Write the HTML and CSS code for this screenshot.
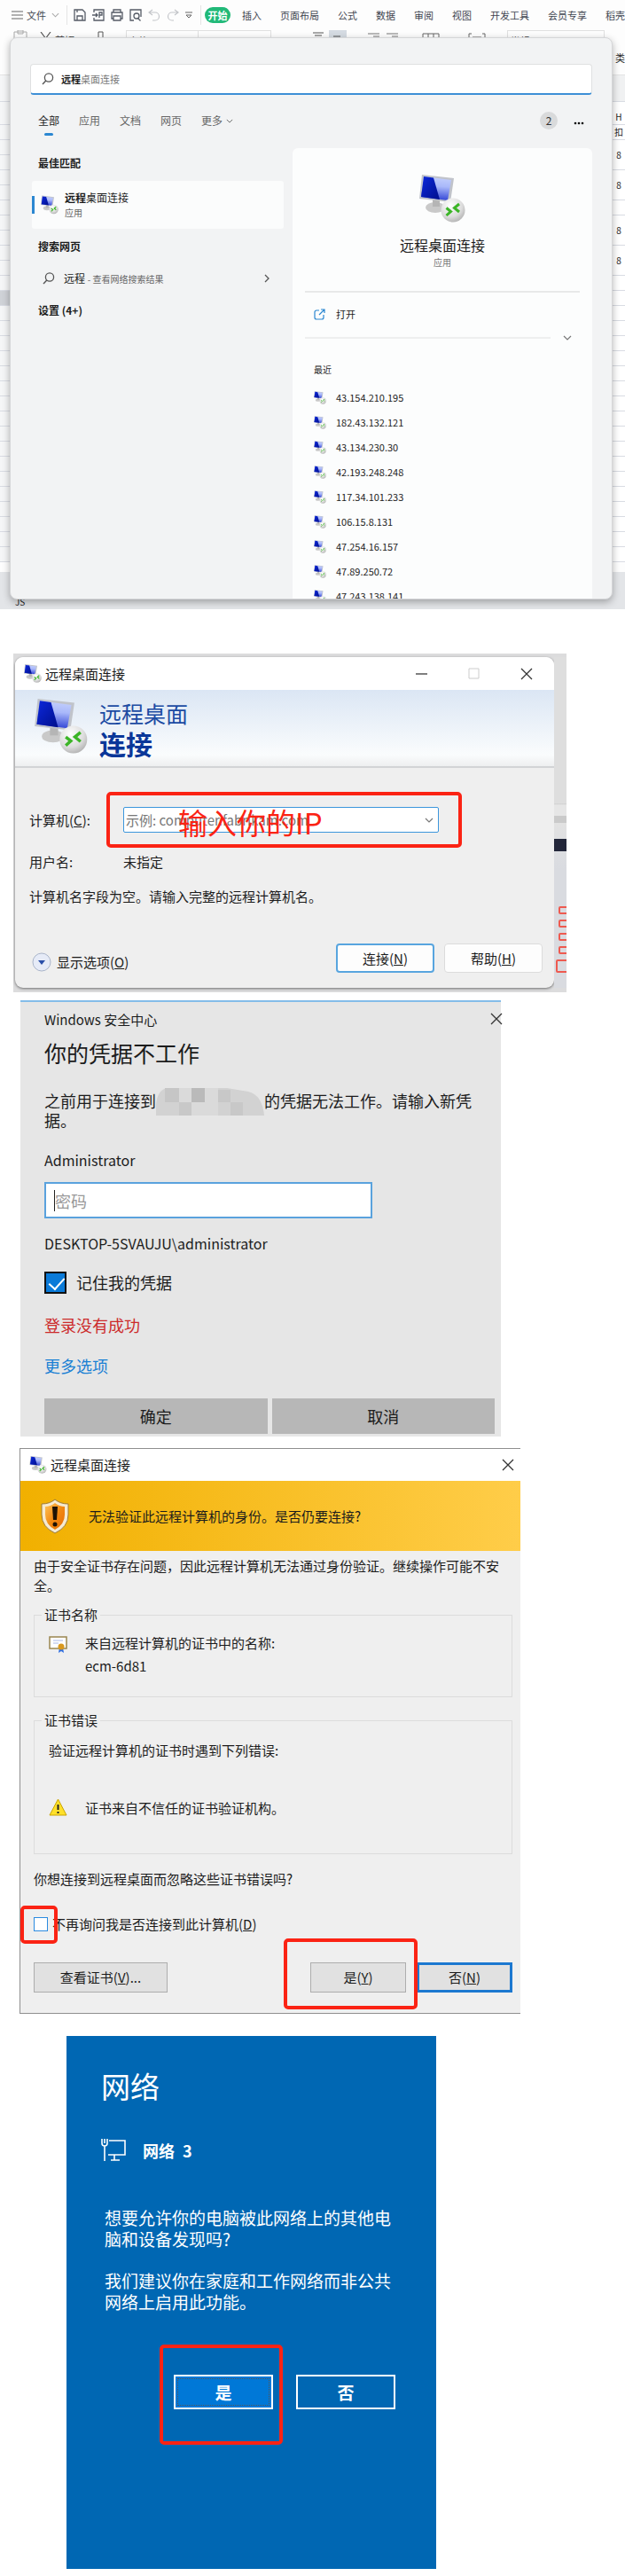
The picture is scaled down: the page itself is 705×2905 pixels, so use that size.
FILE: index.html
```html
<!DOCTYPE html>
<html lang="zh-CN">
<head>
  <meta charset="UTF-8" />
  <meta name="viewport" content="width=device-width, initial-scale=1.0"/>
  <title>远程桌面连接</title>
  <link rel="stylesheet" href="styles.css">
</head>
<body>
  <!-- shared icons -->
  <svg class="defs" width="0" height="0" aria-hidden="true">
    <defs>
      <linearGradient id="screen" x1="0.5" y1="0" x2="0.4" y2="1">
        <stop offset="0" stop-color="#c3cffc"/>
        <stop offset="0.4" stop-color="#a9b8fa"/>
        <stop offset="1" stop-color="#2c3fd4"/>
      </linearGradient>
      <linearGradient id="screen-dark" x1="0" y1="0" x2="1" y2="1">
        <stop offset="0" stop-color="#0c28dc"/>
        <stop offset="1" stop-color="#000f8c"/>
      </linearGradient>
      <radialGradient id="ball" cx="0.4" cy="0.3" r="0.8">
        <stop offset="0" stop-color="#ffffff"/>
        <stop offset="0.6" stop-color="#dcdcdc"/>
        <stop offset="1" stop-color="#a8a8a8"/>
      </radialGradient>
      <linearGradient id="shield" x1="0" y1="0" x2="1" y2="1">
        <stop offset="0" stop-color="#ffc45a"/>
        <stop offset="0.5" stop-color="#f28a12"/>
        <stop offset="1" stop-color="#e86a00"/>
      </linearGradient>
    </defs>
    <symbol id="rdp" viewBox="0 0 52 54">
      <ellipse cx="18" cy="37" rx="11" ry="6" fill="#c9c9c9"/>
      <path d="M15 27h8v9h-8z" fill="#b5b5b5"/>
      <path d="M3 0l36 4-4 27L0 27z" fill="#c0c3ca"/>
      <path d="M5 2l31 4-4 23L2 25z" fill="url(#screen)"/>
      <path d="M5 2l11 1.500 7 24.500L2 25z" fill="url(#screen-dark)"/>
      <circle cx="38" cy="40" r="13.500" fill="url(#ball)"/>
      <path d="M30.500 37.500l5 4-5 4.500M45 33l-5.500 4.500 5.500 4.500" fill="none" stroke="#3cb527" stroke-width="3"/>
    </symbol>
    <symbol id="search" viewBox="0 0 14 14">
      <circle cx="8" cy="5.500" r="4.600" fill="none" stroke="#555" stroke-width="1.300"/>
      <path d="M4.800 9L1 13" stroke="#555" stroke-width="1.400"/>
    </symbol>
    <symbol id="down" viewBox="0 0 10 6">
      <path d="M1 1l4 4 4-4" fill="none" stroke="currentColor" stroke-width="1.200"/>
    </symbol>
    <symbol id="close" viewBox="0 0 14 14">
      <path d="M1 1l12 12M13 1L1 13" fill="none" stroke="#333" stroke-width="1.300"/>
    </symbol>
  </svg>

  <section class="workbook">
    <nav class="menu">
      <svg class="burger" width="13" height="10" viewBox="0 0 13 10"><path d="M0 1h13M0 5h13M0 9h13" stroke="#666" stroke-width="1.2"/></svg>
      <a href="#" class="file">文件</a>
      <svg class="file-arrow" width="9" height="6"><use href="#down"/></svg>
      <div class="quick">
        <svg width="14" height="14" viewBox="0 0 14 14"><path d="M1 1h9l3 3v9H1zM4 13V8h6v5M4 1v3" fill="none" stroke="#555b66" stroke-width="1.3"/></svg>
        <svg width="14" height="14" viewBox="0 0 14 14"><path d="M2 4V1h11v12H2v-3M0 7h6M4 5l2 2-2 2M8 10V4h3v3H8" fill="none" stroke="#555b66" stroke-width="1.3"/></svg>
        <svg width="14" height="14" viewBox="0 0 14 14"><path d="M3 4V1h8v3M3 11H1V4h12v7h-2M3 8h8v5H3z" fill="none" stroke="#555b66" stroke-width="1.3"/></svg>
        <svg width="14" height="14" viewBox="0 0 14 14"><path d="M5 13H1V1h12v8M9.5 10.5l3 3" fill="none" stroke="#555b66" stroke-width="1.3"/><circle cx="8" cy="8" r="3" fill="none" stroke="#555b66" stroke-width="1.3"/></svg>
        <svg width="14" height="14" viewBox="0 0 14 14"><path d="M5 1L1 4l4 3M1 4h7a4 4 0 0 1 0 9H5" fill="none" stroke="#c4c6ca" stroke-width="1.2"/></svg>
        <svg width="14" height="14" viewBox="0 0 14 14"><path d="M9 1l4 3-4 3M13 4H6a4 4 0 0 0 0 9h2" fill="none" stroke="#c4c6ca" stroke-width="1.2"/></svg>
        <svg width="8" height="8" viewBox="0 0 8 8"><path d="M0 1h8M1 4h6L4 7z" fill="none" stroke="#666"/></svg>
      </div>
      <button class="start">开始</button>
      <div class="tabs">
        <a href="#">插入</a><a href="#">页面布局</a><a href="#">公式</a><a href="#">数据</a><a href="#">审阅</a><a href="#">视图</a><a href="#">开发工具</a><a href="#">会员专享</a><a href="#">稻壳</a>
      </div>
    </nav>
    <div class="ribbon">
      <svg width="16" height="16" viewBox="0 0 16 16"><path d="M1 16V2h14v14M5 0h6v4H5z" fill="none" stroke="#aaa"/></svg>
      <svg width="13" height="13" viewBox="0 0 13 13"><path d="M1 0l9 12M12 0L3 12" stroke="#555" stroke-width="1.2"/></svg>
      <span>剪切</span>
      <svg class="brush" width="7" height="14" viewBox="0 0 7 14"><path d="M1 14V1h5v13" fill="none" stroke="#555"/></svg>
      <div class="font-box"><span>宋体</span><span>11</span></div>
      <span class="grow">A⁺</span><span>A⁻</span>
      <svg class="align" width="38" height="14" viewBox="0 0 38 14"><path d="M18 0h20v14H18z" fill="#d5dbe2"/><path d="M0 3h12M2 6h8M0 9h12M23 7h8M22 10h10" stroke="#555"/></svg>
      <svg class="indent" width="35" height="14" viewBox="0 0 35 14"><path d="M0 4h13M6 7h7M0 10h13M21 4h13M27 7h7M21 10h13" stroke="#777"/></svg>
      <svg class="merge" width="20" height="14" viewBox="0 0 20 14"><path d="M1 14V4h18v10M7 4v10M13 4v10" fill="none" stroke="#666"/></svg>
      <svg class="wrap" width="20" height="14" viewBox="0 0 20 14"><path d="M4 4H1v10M16 4h3v10M5 8h10" fill="none" stroke="#666"/></svg>
      <div class="format-box">常规</div>
    </div>
    <div class="grid">
      <div class="edge left">
        <i class="bar"></i><i class="tall"></i><i></i><i></i><i></i><i></i><i></i><i></i><i></i><i></i><i></i><i></i><i></i><i></i><i class="picked"></i><i></i><i></i><i></i><i></i><i></i><i></i><i></i><i></i><i></i><i></i><i></i><i></i><i></i><i></i><i></i><i></i><i></i>
      </div>
      <div class="edge right">
        <b>类</b><i class="bar"></i><i class="tall"></i><i class="head">H</i><i>扣</i><i class="two">8</i><i class="two">8</i><i></i><i class="two">8</i><i class="two">8</i><i></i><i></i><i></i><i></i><i></i><i></i><i></i><i></i><i></i><i></i><i></i><i></i><i></i><i></i><i></i><i></i><i></i><i></i><i></i>
      </div>
    </div>
    <div class="status">JS</div>

    <div class="search-panel">
      <div class="search-box">
        <svg width="14" height="14"><use href="#search"/></svg>
        <input type="text" value="远程" aria-label="搜索">
        <span>桌面连接</span>
      </div>
      <div class="filters">
        <a href="#" class="on">全部</a>
        <a href="#">应用</a>
        <a href="#">文档</a>
        <a href="#">网页</a>
        <a href="#" class="more">更多 <svg width="8" height="5"><use href="#down"/></svg></a>
        <span class="count">2</span>
        <button class="dots" aria-label="更多选项"><svg width="12" height="4" viewBox="0 0 12 4"><circle cx="2" cy="2" r="1.3"/><circle cx="6" cy="2" r="1.3"/><circle cx="10" cy="2" r="1.3"/></svg></button>
      </div>
      <div class="results">
        <div class="matches">
          <h3>最佳匹配</h3>
          <a href="#" class="best">
            <svg width="20" height="22"><use href="#rdp"/></svg>
            <span><strong>远程</strong>桌面连接<small>应用</small></span>
          </a>
          <h3>搜索网页</h3>
          <a href="#" class="web">
            <svg width="14" height="14"><use href="#search"/></svg>
            <span>远程 <small>- 查看网络搜索结果</small></span>
            <svg class="go" width="6" height="10" viewBox="0 0 6 10"><path d="M1 1l4 4-4 4" fill="none" stroke="#555" stroke-width="1.3"/></svg>
          </a>
          <h3>设置 (4+)</h3>
        </div>
        <div class="detail">
          <svg class="app-icon" width="52" height="54"><use href="#rdp"/></svg>
          <h2>远程桌面连接</h2>
          <p>应用</p>
          <a href="#" class="open">
            <svg width="13" height="13" viewBox="0 0 13 13"><path d="M6 2H3a2 2 0 0 0-2 2v6a2 2 0 0 0 2 2h6a2 2 0 0 0 2-2V7M8 1h4v4M12 1L6 7" fill="none" stroke="#2b87d1" stroke-width="1.2"/></svg>
            打开
          </a>
          <div class="fold"><hr><svg width="10" height="6"><use href="#down"/></svg></div>
          <h4>最近</h4>
          <ul>
            <li><svg width="14" height="15"><use href="#rdp"/></svg>43.154.210.195</li>
            <li><svg width="14" height="15"><use href="#rdp"/></svg>182.43.132.121</li>
            <li><svg width="14" height="15"><use href="#rdp"/></svg>43.134.230.30</li>
            <li><svg width="14" height="15"><use href="#rdp"/></svg>42.193.248.248</li>
            <li><svg width="14" height="15"><use href="#rdp"/></svg>117.34.101.233</li>
            <li><svg width="14" height="15"><use href="#rdp"/></svg>106.15.8.131</li>
            <li><svg width="14" height="15"><use href="#rdp"/></svg>47.254.16.157</li>
            <li><svg width="14" height="15"><use href="#rdp"/></svg>47.89.250.72</li>
            <li><svg width="14" height="15"><use href="#rdp"/></svg>47.243.138.141</li>
          </ul>
        </div>
      </div>
    </div>
  </section>

  <section class="connect-shot">
    <div class="connect">
      <header class="titlebar">
        <svg width="20" height="21"><use href="#rdp"/></svg>
        <span>远程桌面连接</span>
        <button aria-label="最小化"><svg width="13" height="14" viewBox="0 0 13 14"><path d="M0 7h13" stroke="#555" stroke-width="1.3"/></svg></button>
        <button aria-label="最大化"><svg width="13" height="14" viewBox="0 0 13 14"><path d="M1 1h11v11H1z" fill="none" stroke="#ccc"/></svg></button>
        <button aria-label="关闭"><svg width="14" height="14"><use href="#close"/></svg></button>
      </header>
      <div class="brand">
        <svg width="60" height="62"><use href="#rdp"/></svg>
        <div>远程桌面<strong>连接</strong></div>
      </div>
      <form class="connect-form">
        <label for="host">计算机(<u>C</u>):</label>
        <div class="combo">
          <input id="host" type="text" placeholder="示例: computer.fabrikam.com">
          <svg width="10" height="6"><use href="#down"/></svg>
          <div class="mark">输入你的IP</div>
        </div>
        <span>用户名:</span>
        <span class="user">未指定</span>
        <p>计算机名字段为空。请输入完整的远程计算机名。</p>
      </form>
      <footer>
        <a href="#" class="options">
          <svg width="22" height="22" viewBox="0 0 22 22"><circle cx="11" cy="11" r="10" fill="#e6ebf7" stroke="#a9b4c9"/><path d="M7 9h8l-4 5z" fill="#2a4fa8"/></svg>
          <span>显示选项(<u>O</u>)</span>
        </a>
        <button class="primary">连接(<u>N</u>)</button>
        <button>帮助(<u>H</u>)</button>
      </footer>
    </div>
    <!-- strip of the window behind the dialog -->
    <div class="behind">
      <i class="navy"></i>
      <i class="tag"></i><i class="tag"></i><i class="tag"></i><i class="tag"></i><i class="tag big"></i>
    </div>
  </section>

  <section class="security">
    <header>
      <span>Windows 安全中心</span>
      <button aria-label="关闭"><svg width="14" height="14"><use href="#close"/></svg></button>
    </header>
    <h2>你的凭据不工作</h2>
    <p class="why">之前用于连接到<svg class="mosaic" width="122" height="31" viewBox="0 0 122 31"><path d="M0 31V18Q2 2 12 0h68l24 4q16 4 18 27z" fill="#d2d2d2"/><path d="M10 0h16v16H10z" fill="#c6c6c6"/><path d="M40 0h15v16H40z" fill="#bababa"/><path d="M70 2h14v14H70zM84 16h14v15H84zM26 16h14v15H26z" fill="#c8c8c8"/><path d="M55 0h15v16H55zM40 16h30v15H40zM26 0h14v16H26z" fill="#dadada"/></svg>的凭据无法工作。请输入新凭据。</p>
    <label class="account" for="password">Administrator</label>
    <div class="password"><i></i><input id="password" type="password" placeholder="密码"></div>
    <p class="domain">DESKTOP-5SVAUJU\administrator</p>
    <label class="remember"><input type="checkbox" checked> 记住我的凭据</label>
    <p class="error">登录没有成功</p>
    <a href="#" class="others">更多选项</a>
    <footer>
      <button>确定</button>
      <button>取消</button>
    </footer>
  </section>

  <section class="cert">
    <header class="titlebar">
      <svg width="20" height="20"><use href="#rdp"/></svg>
      <span>远程桌面连接</span>
      <button aria-label="关闭"><svg width="14" height="14"><use href="#close"/></svg></button>
    </header>
    <div class="warning">
      <svg width="34" height="40" viewBox="0 0 34 40"><path d="M17 1q6 5 15 5v12q0 14-15 21Q2 32 2 18V6q9 0 15-5z" fill="#f6ead0" stroke="#9b7b3a"/><path d="M17 5q5 4 11 4v9q0 11-11 17Q6 29 6 18V9q6 0 11-4z" fill="url(#shield)"/><path d="M14 9h6l-1 15h-4z" fill="#1d1205"/><circle cx="17" cy="29" r="2.5" fill="#1d1205"/></svg>
      无法验证此远程计算机的身份。是否仍要连接?
    </div>
    <div class="cert-body">
      <p>由于安全证书存在问题，因此远程计算机无法通过身份验证。继续操作可能不安全。</p>
      <fieldset class="name">
        <legend>证书名称</legend>
        <svg width="21" height="20" viewBox="0 0 21 20"><path d="M1 1h19v13H1z" fill="#fff" stroke="#9b8650" stroke-width="1.5"/><path d="M5 5h11M5 8h6" stroke="#a9b8e8"/><path d="M12 13l-1 6 3-2 3 2-1-6z" fill="#2f6fe0"/><circle cx="14" cy="12" r="3.5" fill="#d9981e"/></svg>
        <div>来自远程计算机的证书中的名称:<br>ecm-6d81</div>
      </fieldset>
      <fieldset class="errors">
        <legend>证书错误</legend>
        <p>验证远程计算机的证书时遇到下列错误:</p>
        <svg width="21" height="20" viewBox="0 0 21 20"><path d="M10.5 1L20 19H1z" fill="#ffe02a" stroke="#c9a400" stroke-linejoin="round"/><path d="M10.5 7v6M10.5 15v2" stroke="#222" stroke-width="2"/></svg>
        <div>证书来自不信任的证书验证机构。</div>
      </fieldset>
      <p>你想连接到远程桌面而忽略这些证书错误吗?</p>
      <label class="ask"><span class="tick"><input type="checkbox"></span><span>不再询问我是否连接到此计算机(<u>D</u>)</span></label>
      <footer>
        <button class="view">查看证书(<u>V</u>)...</button>
        <span class="yes"><button>是(<u>Y</u>)</button></span>
        <button class="no">否(<u>N</u>)</button>
      </footer>
    </div>
  </section>

  <section class="network">
    <h1>网络</h1>
    <div class="net-name">
      <svg width="28" height="26" viewBox="0 0 28 26"><path d="M9 2h18v16H8M15 18v6M11 24h10M4 8v17M1 0v5q0 3 3 3t3-3V0M4 0v5" fill="none" stroke="#fff" stroke-width="1.6"/></svg>
      网络&ensp;3
    </div>
    <p>想要允许你的电脑被此网络上的其他电脑和设备发现吗?</p>
    <p>我们建议你在家庭和工作网络而非公共网络上启用此功能。</p>
    <footer>
      <span class="allow"><button>是</button></span>
      <button>否</button>
    </footer>
  </section>
</body>
</html>
```
FILE: styles.css
```css
* {
  box-sizing: border-box;
}
body {
  margin: 0;
  background: #fff;
  font-family: 'Noto Sans CJK SC', 'Noto Sans', sans-serif;
  font-size: 15px;
  line-height: 22px;
  color: #1c1c1c;
}
h1, h2, h3, h4, p, ul {
  margin: 0;
  padding: 0;
}
a {
  color: inherit;
  text-decoration: none;
}
button, input {
  font: inherit;
  color: inherit;
  margin: 0;
  padding: 0;
}
svg {
  flex: none;
}
.defs {
  position: absolute;
}

/* spreadsheet and start menu search */
.workbook {
  position: relative;
  overflow: hidden;
  height: 687px;
  background: #fdfdfd;
  font-size: 11px;
}
.menu {
  display: flex;
  align-items: center;
  height: 33px;
  padding-left: 13px;
  color: #3f4550;
  white-space: nowrap;
}
.file {
  margin-left: 4px;
}
.file-arrow {
  margin-left: 6px;
  color: #aaa;
}
.quick {
  display: flex;
  align-items: center;
  gap: 7px;
  height: 22px;
  margin-left: 8px;
  padding: 0 9px 0 7px;
  border: solid #e4e4e4;
  border-width: 0 1px;
}
.start {
  width: 38px;
  height: 18px;
  margin-left: 4px;
  border: none;
  border-radius: 9px;
  background: #21b978;
  color: #fff;
  font-weight: bold;
  line-height: 18px;
}
.tabs {
  display: flex;
  gap: 21px;
  margin-left: 13px;
}
.ribbon {
  display: flex;
  height: 51px;
  padding: 1px 0 0 15px;
  color: #444;
}
.ribbon svg:nth-child(2) {
  margin: 2px 4px 0 14px;
}
.ribbon .brush {
  margin: 1px 25px 0 26px;
}
.font-box {
  display: flex;
  width: 164px;
  border: 1px solid #e0e0e0;
}
.font-box span {
  width: 106px;
  padding-left: 2px;
  border-right: 1px solid #e0e0e0;
}
.font-box span + span {
  border: none;
}
.grow {
  margin: 0 4px 0 9px;
}
.ribbon .align {
  margin-left: 13px;
}
.indent {
  margin-left: 24px;
}
.merge {
  margin-left: 26px;
}
.wrap {
  margin-left: 32px;
}
.format-box {
  width: 110px;
  margin-left: 24px;
  padding-left: 3px;
  border: 1px solid #e0e0e0;
}
.grid {
  display: flex;
  justify-content: space-between;
}
.edge {
  position: relative;
  width: 14px;
}
.edge i {
  display: block;
  height: 17px;
  border-bottom: 1px solid #d9dce3;
  background: #fff;
  font-style: normal;
  font-size: 10px;
  line-height: 16px;
  text-align: center;
  overflow: hidden;
}
.edge b {
  position: absolute;
  top: -30px;
  right: 0;
  font-weight: normal;
}
.edge.left i {
  background: #f5f6f7;
}
.edge .two {
  height: 34px;
  line-height: 34px;
}
.edge .bar {
  height: 31px;
  border-top: 1px solid #e4e4e4;
  background: #f0f1f2;
}
.edge .tall {
  height: 9px;
  border: none;
}
.edge.left .picked {
  background: #cfd2d7;
}
.status {
  position: absolute;
  right: 0;
  bottom: 0;
  left: 0;
  height: 42px;
  padding: 23px 0 0 17px;
  background: #e3e5e8;
  font-size: 10px;
}
.search-panel {
  position: absolute;
  top: 42px;
  right: 14px;
  bottom: 11px;
  left: 11px;
  display: flex;
  flex-direction: column;
  overflow: hidden;
  padding: 29px 22px 0;
  border: 1px solid #d5d6d8;
  border-radius: 8px;
  background: #f2f3f4;
  box-shadow: 0 3px 8px rgba(0, 0, 0, 0.3);
}
.search-box {
  display: flex;
  align-items: center;
  flex: none;
  height: 35px;
  padding-left: 12px;
  border: 1px solid #dfe0e1;
  border-bottom: 2px solid #3d8fd6;
  border-radius: 4px;
  background: #fff;
}
.search-box input {
  width: 22px;
  margin-left: 8px;
  border: none;
  outline: none;
  background: none;
  font-weight: bold;
}
.search-box span {
  color: #777;
}
.filters {
  display: flex;
  align-items: center;
  gap: 22px;
  height: 46px;
  margin-top: 6px;
  padding: 0 9px;
  color: #666;
  font-size: 12px;
}
.filters .on {
  position: relative;
  color: #222;
}
.filters .on::after {
  content: "";
  position: absolute;
  bottom: -6px;
  left: 7px;
  width: 10px;
  height: 3px;
  border-radius: 2px;
  background: #2b87d1;
}
.more {
  display: flex;
  align-items: center;
  gap: 4px;
}
.count {
  width: 20px;
  height: 20px;
  margin-left: auto;
  border-radius: 50%;
  background: #d9dadb;
  line-height: 20px;
  text-align: center;
  color: #333;
}
.dots {
  margin-left: -4px;
  border: none;
  background: none;
  line-height: 10px;
}
.results {
  display: grid;
  grid-template-columns: 286fr 338fr;
  gap: 10px;
  flex: 1;
  min-height: 0;
  margin-top: 8px;
}
.matches {
  padding: 6px 0 0 2px;
}
.matches h3 {
  padding-left: 7px;
  font-size: 12px;
  line-height: 22px;
}
.best {
  display: flex;
  align-items: center;
  height: 54px;
  margin: 9px 0;
  padding-left: 7px;
  border-radius: 3px;
  background: #fbfcfc;
  font-size: 12px;
  line-height: 17px;
}
.best::before {
  content: "";
  width: 3px;
  height: 20px;
  margin: 0 7px 0 -7px;
  background: #2b87d1;
}
.best span {
  margin-left: 7px;
}
small {
  color: #666;
  font-size: 10px;
}
.best small {
  display: block;
}
.web {
  display: flex;
  align-items: center;
  height: 50px;
  padding: 0 16px 0 12px;
  font-size: 12px;
}
.web span {
  margin: 0 auto 0 10px;
}
.detail {
  padding: 30px 14px 0;
  border-radius: 6px 6px 0 0;
  background: #fcfdfd;
  text-align: center;
}
.app-icon {
  display: block;
  margin: 0 auto 13px;
}
.detail h2 {
  font-size: 16px;
  font-weight: normal;
  line-height: 24px;
}
.detail p {
  padding-bottom: 24px;
  border-bottom: 2px solid #e8e9e9;
  color: #777;
  font-size: 10px;
  line-height: 16px;
}
.open {
  display: flex;
  align-items: center;
  gap: 12px;
  height: 48px;
  padding-left: 10px;
}
.fold {
  display: flex;
  align-items: center;
  justify-content: space-between;
  height: 6px;
  padding-right: 9px;
  color: #777;
}
.fold hr {
  width: 277px;
  margin: 0;
  border: none;
  border-top: 2px solid #eeefef;
}
.detail h4 {
  margin: 22px 0 6px 10px;
  font-size: 10px;
  font-weight: normal;
  text-align: left;
}
.detail ul {
  list-style: none;
  padding-left: 10px;
}
.detail li {
  display: flex;
  align-items: center;
  gap: 11px;
  height: 28px;
}

/* remote desktop connection */
.connect-shot {
  display: flex;
  max-width: 624px;
  margin: 50px 0 0 15px;
  padding: 4px 0 5px 2px;
  background: #dcdcdd;
}
.connect {
  flex: 1;
  border-radius: 9px;
  background: #efefef;
  box-shadow: 0 1px 3px rgba(0, 0, 0, 0.5);
  overflow: hidden;
}
.titlebar {
  display: flex;
  align-items: center;
  height: 37px;
  padding: 0 24px 0 10px;
  background: #fff;
}
.titlebar span {
  margin: 0 auto 0 4px;
}
.titlebar button {
  display: flex;
  margin-left: 46px;
  border: none;
  background: none;
}
.brand {
  display: flex;
  gap: 13px;
  height: 88px;
  padding: 10px 0 0 22px;
  border-bottom: 2px solid #d2d4d6;
  background: linear-gradient(#dbe6f4, #fafcfd 85%, #eeeff0);
  color: #1c4ba3;
  font-size: 25px;
  line-height: 32px;
}
.brand strong {
  display: block;
  color: #0a3799;
  font-size: 30px;
  line-height: 36px;
}
.connect-form {
  display: grid;
  grid-template-columns: 106px 1fr;
  row-gap: 22px;
  align-items: center;
  padding: 44px 130px 0 16px;
}
.combo {
  position: relative;
  display: flex;
  align-items: center;
  height: 29px;
  padding: 0 5px 0 2px;
  border: 1px solid #3c96dc;
  border-radius: 2px;
  background: #fff;
  color: #777;
}
.combo input {
  flex: 1;
  min-width: 0;
  border: none;
  outline: none;
  background: none;
}
::placeholder {
  color: #777;
  opacity: 1;
}
.mark {
  position: absolute;
  top: -18px;
  right: -27px;
  bottom: -18px;
  left: -20px;
  padding-left: 77px;
  border: 4px solid #fb2314;
  border-radius: 5px;
  color: #fb2314;
  font-size: 33px;
  line-height: 60px;
  pointer-events: none;
}
.connect-form p {
  grid-column: span 2;
  margin-top: -5px;
}
.connect footer {
  display: flex;
  gap: 11px;
  margin-top: 42px;
  padding: 0 13px 17px 19px;
}
.options {
  display: flex;
  align-items: center;
  gap: 6px;
  margin: 9px auto 0 0;
}
.connect footer button {
  width: 111px;
  height: 33px;
  border: 1px solid #dcdcdc;
  border-radius: 4px;
  background: #fdfdfd;
}
.connect footer .primary {
  border: 2px solid #58a5df;
}
.behind {
  width: 14px;
  padding-top: 205px;
  background: linear-gradient(#dedede 165px, #cfcfcf 165px, #e6e6e6 167px, #e6e6e6 179px, #cacaca 179px, #cacaca 187px, #e2e2e2 187px, #d9dbe0 240px);
  overflow: hidden;
}
.behind i {
  display: block;
}
.navy {
  height: 14px;
  margin-bottom: 62px;
  background: #23273a;
}
.tag {
  height: 9px;
  width: 14px;
  margin: 0 0 6px 5px;
  border: 2px solid #ee5a50;
  border-radius: 2px;
}
.tag.big {
  height: 15px;
  margin-left: 2px;
}

/* Windows security */
.security {
  max-width: 542px;
  margin: 9px 0 0 23px;
  padding: 9px 7px 3px 27px;
  border-top: 2px solid #84bde9;
  background: #e6e6e6;
  font-size: 18px;
}
.security header {
  display: flex;
  justify-content: space-between;
  margin-right: -9px;
  overflow: hidden;
  font-size: 15px;
}
.security header button {
  border: none;
  background: none;
}
.security h2 {
  margin-top: 8px;
  font-size: 25px;
  font-weight: normal;
  line-height: 36px;
}
.why {
  margin: 25px 20px 0 0;
}
.mosaic {
  display: inline-block;
  margin: -12px 0 -8px;
  vertical-align: middle;
}
.account {
  display: block;
  margin: 23px 0 14px;
  font-size: 16px;
}
.password {
  display: flex;
  align-items: center;
  max-width: 370px;
  height: 41px;
  padding-left: 9px;
  border: 2px solid #5aa2dd;
  background: #fff;
}
.password i {
  height: 24px;
  border-left: 1px solid #222;
}
.password input {
  flex: 1;
  border: none;
  outline: none;
}
.password ::placeholder {
  color: #999;
}
.domain {
  margin-top: 17px;
  font-size: 16px;
}
.remember {
  display: flex;
  align-items: center;
  gap: 11px;
  height: 26px;
  margin-top: 20px;
}
.remember input {
  appearance: none;
  position: relative;
  width: 25px;
  height: 25px;
  border: 2px solid #111;
  background: #0a7ad8;
}
.remember input:checked::after {
  content: "";
  position: absolute;
  top: 1px;
  left: 7px;
  width: 8px;
  height: 15px;
  border: solid #fff;
  border-width: 0 2px 2px 0;
  transform: rotate(42deg);
}
.error {
  margin: 24px 0;
  color: #cc2b2b;
}
.others {
  color: #1a80d4;
}
.security footer {
  display: flex;
  gap: 5px;
  margin-top: 26px;
}
.security footer button {
  flex: 1;
  height: 40px;
  border: none;
  background: #b7b7b7;
}

/* certificate warning */
.cert {
  max-width: 565px;
  margin: 13px 0 0 22px;
  border: solid #8f8f8f;
  border-width: 1px 0 1px 1px;
  background: #efefef;
}
.cert .titlebar {
  height: 36px;
  padding-right: 7px;
}
.warning {
  display: flex;
  align-items: center;
  gap: 21px;
  height: 79px;
  padding-left: 22px;
  background: linear-gradient(90deg, #f1b000, #ffcd49);
}
.cert-body {
  padding: 6px 9px 0 15px;
}
.cert-body > p {
  padding-right: 9px;
}
fieldset {
  display: grid;
  grid-template-columns: 30px 1fr;
  align-content: start;
  column-gap: 11px;
  margin: 0;
  padding: 0 16px;
  border: 1px solid #dcdcdc;
}
legend {
  padding: 0 3px;
  margin-left: -8px;
}
.name {
  height: 104px;
  margin-top: 11px;
  padding-top: 8px;
  line-height: 26px;
}
.name legend {
  line-height: 22px;
}
.name svg {
  margin-top: 5px;
}
.errors {
  height: 162px;
  margin-top: 15px;
  padding-top: 12px;
}
.errors p {
  grid-column: span 2;
  margin-bottom: 43px;
}
.errors + p {
  margin-top: 17px;
}
.ask {
  display: flex;
  align-items: center;
  gap: 5px;
  height: 22px;
  margin-top: 29px;
}
.tick, .yes, .allow {
  position: relative;
  display: flex;
}
.tick input {
  appearance: none;
  width: 16px;
  height: 16px;
  border: 1px solid #2b8be0;
  background: #fff;
}
.tick::after, .yes::after, .allow::after {
  content: "";
  position: absolute;
  border: 4px solid #fb2314;
  border-radius: 5px;
  pointer-events: none;
}
.tick::after {
  inset: -13px -11px -14px -15px;
}
.yes::after {
  inset: -27px -13px -19px -30px;
}
.cert footer {
  display: flex;
  gap: 12px;
  margin-top: 32px;
  padding-bottom: 23px;
}
.cert footer button {
  width: 108px;
  height: 34px;
  border: 1px solid #adadad;
  background: #e1e1e1;
}
.cert footer .view {
  width: 151px;
  margin-right: auto;
}
.cert footer .no {
  border: 3px solid #1c78d0;
}

/* network discovery */
.network {
  max-width: 417px;
  height: 601px;
  margin: 25px 0 8px 75px;
  padding: 34px 46px 0 43px;
  background: #0067b3;
  color: #fff;
  font-size: 19px;
  line-height: 24px;
}
.network h1 {
  margin-left: -4px;
  font-size: 33px;
  font-weight: normal;
  line-height: 44px;
}
.net-name {
  display: flex;
  align-items: center;
  gap: 19px;
  height: 26px;
  margin: 38px 0 51px -4px;
  font-size: 18px;
  font-weight: bold;
}
.network p {
  margin-bottom: 23px;
}
.network footer {
  display: flex;
  justify-content: flex-end;
  gap: 26px;
  padding-top: 47px;
}
.network footer button {
  width: 112px;
  height: 39px;
  border: 2px solid #fff;
  background: none;
  font-weight: bold;
}
.network .allow button {
  background: #0078d7;
  outline: 1px dotted #555;
  outline-offset: -5px;
}
.allow::after {
  inset: -34px -11px -40px -16px;
}
```
